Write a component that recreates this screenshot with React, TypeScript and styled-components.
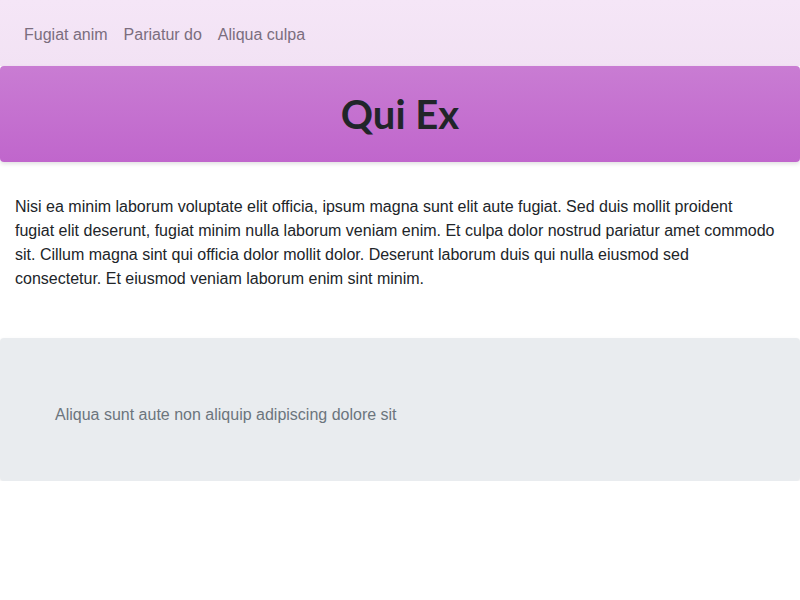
import React from "react";
import styled, { createGlobalStyle } from "styled-components";

const GlobalStyle = createGlobalStyle`
  html, body { margin: 0; padding: 0; background: #ffffff; }
  body {
    font-family: "Segoe UI", "Liberation Sans", Arial, sans-serif;
    font-size: 16px;
    line-height: 24px;
    color: #212529;
  }
  * { box-sizing: border-box; }
`;

const Page = styled.div`
  display: flex;
  flex-direction: column;
  width: 800px;
`;

const NavBar = styled.nav`
  display: flex;
  align-items: center;
  height: 66px;
  padding: 3px 16px 0;
  background: linear-gradient(180deg, #f5e6f7 0%, #f2e2f4 100%);
`;

const NavLink = styled.a`
  display: block;
  padding: 8px 8px;
  color: #7b6e7e;
  font-size: 16px;
  text-decoration: none;
`;

const Header = styled.header`
  display: flex;
  align-items: center;
  justify-content: center;
  height: 96px;
  border-radius: 4px;
  background: linear-gradient(180deg, #c97cd3 0%, #c066cc 100%);
  box-shadow: 0 2px 4px rgba(0, 0, 0, 0.12);
`;

const Title = styled.h1`
  margin: 0;
  font-family: Lato, "Liberation Sans", sans-serif;
  font-size: 40px;
  line-height: 48px;
  font-weight: 700;
  color: #212529;
`;

const Body = styled.main`
  padding: 33px 25px 0 15px;
`;

const Paragraph = styled.p`
  margin: 0;
`;

const Jumbo = styled.section`
  margin-top: 47px;
  padding: 65px 55px 54px;
  height: 143px;
  border-radius: 4px;
  background: #e9ecef;
  box-shadow: 0 2px 4px rgba(0, 0, 0, 0.08);
`;

const Lead = styled.p`
  margin: 0;
  color: #6c757d;
`;

export default function App() {
  return (
    <>
      <GlobalStyle />
      <Page>
        <NavBar>
          <NavLink href="#">Fugiat anim</NavLink>
          <NavLink href="#">Pariatur do</NavLink>
          <NavLink href="#">Aliqua culpa</NavLink>
        </NavBar>
        <Header>
          <Title>Qui Ex</Title>
        </Header>
        <Body>
          <Paragraph>
            Nisi ea minim laborum voluptate elit officia, ipsum magna sunt elit aute fugiat. Sed duis mollit
            proident fugiat elit deserunt, fugiat minim nulla laborum veniam enim. Et culpa dolor nostrud
            pariatur amet commodo sit. Cillum magna sint qui officia dolor mollit dolor. Deserunt laborum duis
            qui nulla eiusmod sed consectetur. Et eiusmod veniam laborum enim sint minim.
          </Paragraph>
        </Body>
        <Jumbo>
          <Lead>Aliqua sunt aute non aliquip adipiscing dolore sit</Lead>
        </Jumbo>
      </Page>
    </>
  );
}
